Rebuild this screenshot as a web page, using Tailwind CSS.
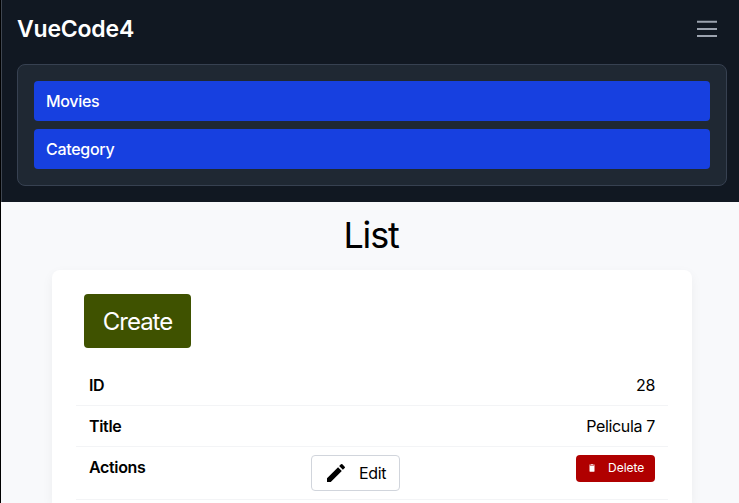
<!DOCTYPE html>
<html lang="en">
<head>
  <meta charset="UTF-8">
  <title>VueCode4</title>
  <script src="https://cdn.jsdelivr.net/npm/@tailwindcss/browser@4"></script>
</head>
<body class="h-[503px] overflow-hidden border-l border-black bg-[#f8f9fb] font-['Inter',sans-serif] text-black">
  <!-- nav -->
  <nav class="h-[202px] border-l border-[#3f4651] bg-[#111822] pl-[15px] pr-[12px] pt-[14px]">
    <div class="flex h-[30px] items-center justify-between pr-[8px]">
      <a class="text-[23px] font-semibold leading-[28px] tracking-[-0.2px] text-white">VueCode4</a>
      <svg width="24" height="24" viewBox="0 0 24 24" fill="none" stroke="#9ca3af" stroke-width="2">
        <path d="M2 4.7h20M2 12h20M2 19h20"/>
      </svg>
    </div>
    <div class="mt-[20px] w-[710px] rounded-lg border border-[#374151] bg-[#1f2833] p-4">
      <a class="block h-10 rounded bg-[#1740e0] px-3 text-base font-medium leading-10 tracking-[-0.3px] text-white">Movies</a>
      <a class="mt-2 block h-10 rounded bg-[#1740e0] px-3 text-base font-medium leading-10 tracking-[-0.3px] text-white">Category</a>
    </div>
  </nav>

  <main class="-ml-px">
    <h1 class="ml-[51px] mt-[10px] h-[58px] w-[640px] text-center text-4xl leading-[46px] tracking-[-1.2px]">List</h1>
    <section class="ml-[52px] h-[233px] w-[640px] rounded-t-lg bg-white px-6 pt-6 shadow-[0_4px_12px_rgba(0,0,0,0.05)]">
      <button class="ml-2 h-[54px] w-[107px] rounded bg-[#3f5200] pt-[2px] text-2xl tracking-[-1px] text-white">Create</button>
      <table class="mt-4 w-[592px] text-base tracking-[-0.35px]">
        <tbody>
          <tr class="h-[41px] border-b border-gray-100">
            <th class="w-[235px] pl-[13px] pt-[2px] text-left font-semibold">ID</th>
            <td></td>
            <td class="pr-[13px] pt-[2px] text-right">28</td>
          </tr>
          <tr class="h-[41px] border-b border-gray-100">
            <th class="pl-[13px] text-left font-semibold">Title</th>
            <td></td>
            <td class="pr-[13px] text-right">Pelicula 7</td>
          </tr>
          <tr class="h-[53px] border-b border-gray-100">
            <th class="pl-[13px] pt-2 text-left align-top font-semibold">Actions</th>
            <td class="align-top pt-2">
              <button class="flex h-9 w-[89px] items-center rounded border border-gray-300 bg-white pl-3 text-base">
                <svg width="24" height="24" viewBox="0 0 24 24" fill="black"><path d="M3 17.25V21h3.75L17.81 9.94l-3.75-3.75L3 17.25zM20.71 7.04a1 1 0 0 0 0-1.41l-2.34-2.34a1 1 0 0 0-1.41 0l-1.83 1.83 3.75 3.75 1.83-1.83z"/></svg>
                <span class="ml-[11px]">Edit</span>
              </button>
            </td>
            <td class="align-top pt-2 pr-[13px]">
              <button class="ml-auto flex h-[27px] w-[79px] items-center rounded bg-[#b00000] pl-[11px] text-xs tracking-normal text-white">
                <svg width="10" height="10" viewBox="0 0 24 24" fill="white"><path d="M6 19a2 2 0 0 0 2 2h8a2 2 0 0 0 2-2V7H6v12zM19 4h-3.5l-1-1h-5l-1 1H5v2h14V4z"/></svg>
                <span class="ml-[11px]">Delete</span>
              </button>
            </td>
          </tr>
        </tbody>
      </table>
    </section>
  </main>
</body>
</html>
